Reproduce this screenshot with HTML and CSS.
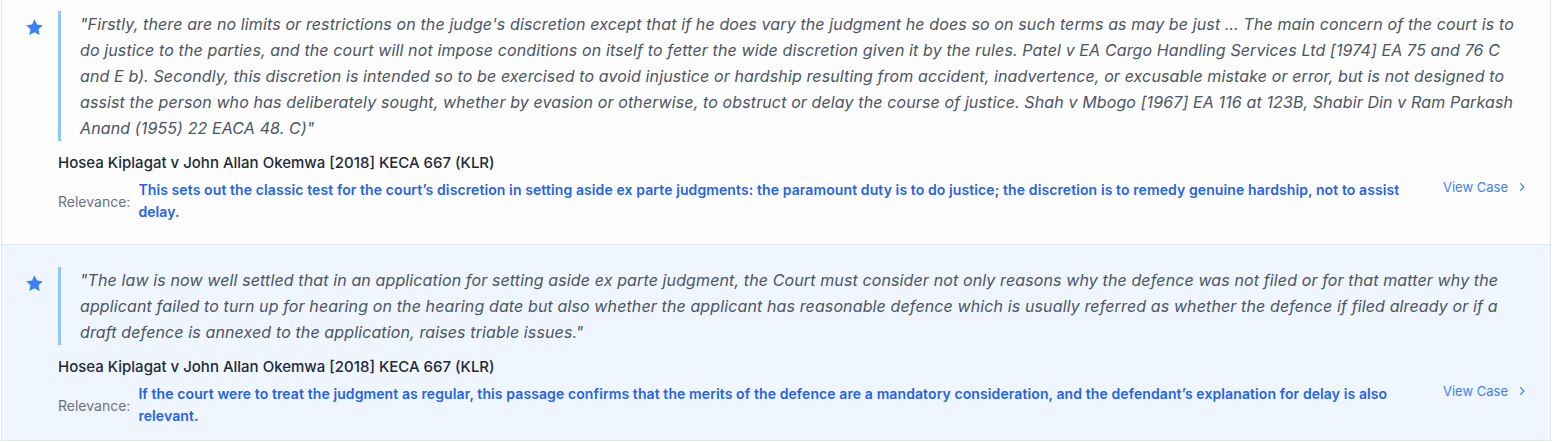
FILE: index.html
```html
<!DOCTYPE html>
<html lang="en">
<head>
<meta charset="utf-8">
<title>Key passages</title>
<link rel="stylesheet" href="styles.css">
</head>
<body>
<div class="list">
  <article class="card card--first">
    <svg class="star" viewBox="0 0 24 24" aria-hidden="true"><path d="M12 2.5l2.9 6.1 6.6.8-4.9 4.6 1.3 6.6L12 17.3l-5.9 3.3 1.3-6.6-4.9-4.6 6.6-.8z"/></svg>
    <div class="body">
      <blockquote class="quote">"Firstly, there are no limits or restrictions on the judge's discretion except that if he does vary the judgment he does so on such terms as may be just … The main concern of the court is to do justice to the parties, and the court will not impose conditions on itself to fetter the wide discretion given it by the rules. Patel v EA Cargo Handling Services Ltd [1974] EA 75 and 76 C and E b). Secondly, this discretion is intended so to be exercised to avoid injustice or hardship resulting from accident, inadvertence, or excusable mistake or error, but is not designed to assist the person who has deliberately sought, whether by evasion or otherwise, to obstruct or delay the course of justice. Shah v Mbogo [1967] EA 116 at 123B, Shabir Din v Ram Parkash Anand (1955) 22 EACA 48. C)"</blockquote>
      <div class="case">Hosea Kiplagat v John Allan Okemwa [2018] KECA 667 (KLR)</div>
      <div class="relevance">
        <span class="label">Relevance:</span>
        <span class="text">This sets out the classic test for the court’s discretion in setting aside ex parte judgments: the paramount duty is to do justice; the discretion is to remedy genuine hardship, not to assist delay.</span>
        <a class="view" href="#">View Case <svg class="chev" viewBox="0 0 16 16" aria-hidden="true"><path d="M6 3.5l4.5 4.5L6 12.5"/></svg></a>
      </div>
    </div>
  </article>
  <article class="card card--active">
    <svg class="star" viewBox="0 0 24 24" aria-hidden="true"><path d="M12 2.5l2.9 6.1 6.6.8-4.9 4.6 1.3 6.6L12 17.3l-5.9 3.3 1.3-6.6-4.9-4.6 6.6-.8z"/></svg>
    <div class="body">
      <blockquote class="quote">"The law is now well settled that in an application for setting aside ex parte judgment, the Court must consider not only reasons why the defence was not filed or for that matter why the applicant failed to turn up for hearing on the hearing date but also whether the applicant has reasonable defence which is usually referred as whether the defence if filed already or if a draft defence is annexed to the application, raises triable issues."</blockquote>
      <div class="case">Hosea Kiplagat v John Allan Okemwa [2018] KECA 667 (KLR)</div>
      <div class="relevance">
        <span class="label">Relevance:</span>
        <span class="text">If the court were to treat the judgment as regular, this passage confirms that the merits of the defence are a mandatory consideration, and the defendant’s explanation for delay is also relevant.</span>
        <a class="view" href="#">View Case <svg class="chev" viewBox="0 0 16 16" aria-hidden="true"><path d="M6 3.5l4.5 4.5L6 12.5"/></svg></a>
      </div>
    </div>
  </article>
</div>
</body>
</html>
```
FILE: styles.css
```css
html, body {
  margin: 0;
  padding: 0;
  background: #ffffff;
  overflow: hidden;
}
body {
  font-family: Inter, "Noto Sans", "Liberation Sans", sans-serif;
  -webkit-font-smoothing: antialiased;
}
.list {
  width: 1548px;
  margin-left: 1px;
  border-left: 1px solid #e5e7eb;
  border-right: 1px solid #e5e7eb;
}
.card {
  display: flex;
  gap: 13px;
  padding: 22px 22px 21px 22px;
  background: #fdfdfd;
  border-bottom: 1px solid #e5e7eb;
}
.card--first {
  padding-top: 11px;
}
.card--active {
  background: #eff6ff;
  padding-bottom: 13px;
}
.star {
  flex: 0 0 auto;
  width: 21px;
  height: 21px;
  margin-top: 6px;
  fill: #3b82f6;
}
.body {
  flex: 1 1 auto;
  min-width: 0;
}
.quote {
  margin: 0;
  padding-left: 19px;
  border-left: 3px solid #93c5fd;
  font-style: italic;
  font-size: 16px;
  line-height: 26px;
  letter-spacing: 0.12px;
  color: #4b5563;
}
.case {
  margin-top: 12px;
  font-size: 15px;
  line-height: 20px;
  font-weight: 500;
  color: #1f2937;
}
.relevance {
  display: flex;
  align-items: center;
  margin-top: 6px;
}
.label {
  flex: 0 0 auto;
  font-size: 14px;
  color: #6b7280;
  margin-right: 8px;
}
.text {
  flex: 1 1 auto;
  font-size: 14px;
  line-height: 22px;
  font-weight: 600;
  letter-spacing: 0.1px;
  color: #2563eb;
}
.view {
  flex: 0 0 auto;
  align-self: flex-start;
  display: flex;
  align-items: center;
  gap: 8px;
  margin-left: 30px;
  margin-top: -2px;
  font-size: 13px;
  line-height: 20px;
  color: #3b82f6;
  text-decoration: none;
}
.chev {
  width: 12px;
  height: 12px;
  fill: none;
  stroke: #3b82f6;
  stroke-width: 1.6;
  stroke-linecap: round;
  stroke-linejoin: round;
}
```
